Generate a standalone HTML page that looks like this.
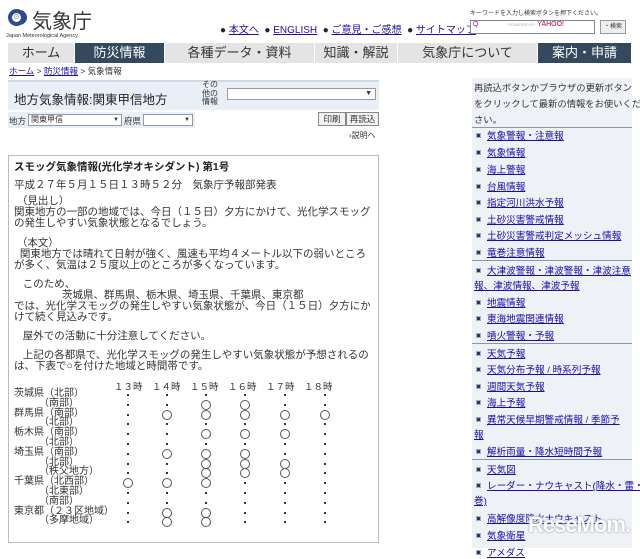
<!DOCTYPE html>
<html><head><meta charset="utf-8"><style>
*{margin:0;padding:0;box-sizing:border-box}
body{width:640px;height:548px;overflow:hidden;background:#fff;font-family:"Liberation Sans","Noto Sans CJK JP",sans-serif;font-size:11px;color:#333;position:relative}
.a{position:absolute;white-space:nowrap}
.l{color:#1a0dab;text-decoration:underline}
.tab{position:absolute;top:43px;height:20px;line-height:20px;text-align:center;font-size:13px;color:#333;background:#e4e4e4;border-right:1px solid #fff}
.dk{background:#34495e;color:#fff}
.sb .it{position:absolute;left:15px;font-size:9.6px;color:#1a0dab;text-decoration:underline;white-space:nowrap}
.sb .it:before{content:"";position:absolute;left:-11px;top:5px;width:5px;height:5px;background:#223a6e;box-shadow:inset 0 0 0 1px #aab}
.sep{position:absolute;left:0;width:160px;height:1px;background:#8a96aa}
.row{position:absolute;left:14px;font-size:10px;line-height:9.8px;color:#333}
.c{position:absolute;width:10px;height:10px;border:1px solid #555;border-radius:50%}
.d{position:absolute;width:2px;height:2px;background:#333}
.t{position:absolute;left:14px;font-size:10.5px;white-space:nowrap;line-height:11px}
</style></head><body>
<div class="a" style="left:8px;top:9px;width:17px;height:17px;border-radius:50%;background:#2c4b8e;box-shadow:3px 0 0 -1px #2c4b8e"></div>
<div class="a" style="left:12px;top:13px;width:9px;height:9px;border-radius:50%;background:#fff;color:#2c4b8e;font-size:7px;line-height:9px;text-align:center">☉</div>
<div class="a" style="left:32px;top:5px;font-size:20px;color:#333">気象庁</div>
<div class="a" style="left:6px;top:33px;font-size:5.5px;color:#333">Japan Meteorological Agency</div>
<div class="a" style="left:220px;top:21px;font-size:10px;color:#1a0dab">
<span style="color:#223">●</span> <span class="l">本文へ</span> &nbsp;<span style="color:#223">●</span> <span class="l">ENGLISH</span> &nbsp;<span style="color:#223">●</span> <span class="l">ご意見・ご感想</span> &nbsp;<span style="color:#223">●</span> <span class="l">サイトマップ</span></div>
<div class="a" style="left:470px;top:8px;font-size:6px;color:#333">キーワードを入力し検索ボタンを押下ください。</div>
<div class="a" style="left:470px;top:20px;width:125px;height:14px;border:1px solid #7a8a9a;background:#fff;font-size:7px;color:#a0a">&nbsp;Q <span style="margin-left:28px;color:#aaa;font-size:4px">POWERED BY</span> <span style="color:#c03">YAHOO!</span></div>
<div class="a" style="left:600px;top:20px;width:26px;height:14px;border:1px solid #999;background:#eee;font-size:6px;text-align:center;line-height:12px">・検索</div>
<div class="tab" style="left:8px;width:67px">ホーム</div>
<div class="tab dk" style="left:75px;width:90px">防災情報</div>
<div class="tab" style="left:165px;width:150px">各種データ・資料</div>
<div class="tab" style="left:315px;width:83px">知識・解説</div>
<div class="tab" style="left:398px;width:140px">気象庁について</div>
<div class="tab dk" style="left:538px;width:94px">案内・申請</div>
<div class="a" style="left:9px;top:65px;font-size:8.5px"><span class="l">ホーム</span> &gt; <span class="l">防災情報</span> &gt; 気象情報</div>
<div class="a" style="left:8px;top:80px;width:371px;height:30px;background:#e9eff7;border-top:2px solid #d0d8e2"></div>
<div class="a" style="left:14px;top:89px;font-size:12.5px;color:#222">地方気象情報:関東甲信地方</div>
<div class="a" style="left:202px;top:81px;font-size:8px;line-height:8.5px;white-space:normal;width:20px">その他の情報</div>
<div class="a" style="left:227px;top:88px;width:149px;height:12px;border:1px solid #999;background:#fff;font-size:7px;text-align:right;padding-right:3px;line-height:10px">▼</div>
<div class="a" style="left:8px;top:112px;width:187px;height:16px;background:#e9eff7"></div>
<div class="a" style="left:9px;top:115px;font-size:8.5px">地方</div>
<div class="a" style="left:28px;top:114px;width:94px;height:12px;border:1px solid #999;background:#fff;font-size:8px;line-height:10px;padding-left:2px">関東甲信<span style="float:right;font-size:6px;padding-right:2px">▼</span></div>
<div class="a" style="left:124px;top:115px;font-size:8.5px">府県</div>
<div class="a" style="left:143px;top:114px;width:50px;height:12px;border:1px solid #999;background:#fff;font-size:6px;line-height:10px;text-align:right;padding-right:2px">▼</div>
<div class="a" style="left:318px;top:112px;width:28px;height:14px;border:1px solid #888;background:#f2f2f2;font-size:8.5px;text-align:center;line-height:12px">印刷</div>
<div class="a" style="left:346px;top:112px;width:33px;height:14px;border:1px solid #888;background:#f2f2f2;font-size:8.5px;text-align:center;line-height:12px">再読込</div>
<div class="a" style="left:349px;top:130px;font-size:8px">›説明へ</div>
<div class="a" style="left:8px;top:155px;width:371px;height:388px;border:1px solid #bbb"></div>
<div class="a" style="left:14px;top:159px;font-size:10.5px;color:#222;font-weight:bold">スモッグ気象情報(光化学オキシダント) 第1号</div>
<div class="t" style="top:180px">平成２７年５月１５日１３時５２分　気象庁予報部発表</div>
<div class="t" style="top:196px">&nbsp;（見出し）</div>
<div class="t" style="top:207px">関東地方の一部の地域では、今日（１５日）夕方にかけて、光化学スモッグ</div>
<div class="t" style="top:218px">の発生しやすい気象状態となるでしょう。</div>
<div class="t" style="top:238px">&nbsp;（本文）</div>
<div class="t" style="top:249px">&nbsp;&nbsp;関東地方では晴れて日射が強く、風速も平均４メートル以下の弱いところ</div>
<div class="t" style="top:260px">が多く、気温は２５度以上のところが多くなっています。</div>
<div class="t" style="top:279px">&nbsp;&nbsp;&nbsp;このため、</div>
<div class="t" style="top:290px;left:62px">茨城県、群馬県、栃木県、埼玉県、千葉県、東京都</div>
<div class="t" style="top:301px">では、光化学スモッグの発生しやすい気象状態が、今日（１５日）夕方にか</div>
<div class="t" style="top:312px">けて続く見込みです。</div>
<div class="t" style="top:331px">&nbsp;&nbsp;&nbsp;屋外での活動に十分注意してください。</div>
<div class="t" style="top:350px">&nbsp;&nbsp;&nbsp;上記の各都県で、光化学スモッグの発生しやすい気象状態が予想されるの</div>
<div class="t" style="top:361px">は、下表で○を付けた地域と時間帯です。</div>
<div class="a" style="left:114px;top:379px;font-size:9.5px">１３時　１４時　１５時　１６時　１７時　１８時</div>
<div class="row" style="top:389px">茨城県（北部）<br>　　　（南部）<br>群馬県（南部）<br>　　　（北部）<br>栃木県（南部）<br>　　　（北部）<br>埼玉県（南部）<br>　　　（北部）<br>　　　（秩父地方）<br>千葉県（北西部）<br>　　　（北東部）<br>　　　（南部）<br>東京都（２３区地域）<br>　　　（多摩地域）</div>
<div id="m"></div>
<div class="a sb" style="left:472px;top:78px;width:160px;height:470px;background:#eef1f6">
<div class="a" style="left:2px;top:2px;font-size:9.3px;line-height:16px;color:#333">再読込ボタンかブラウザの更新ボタン<br>をクリックして最新の情報をお使いくだ<br>さい。</div>
<div class="sep" style="top:49px"></div>
<div class="it" style="top:50px">気象警報・注意報</div>
<div class="it" style="top:67px">気象情報</div>
<div class="it" style="top:84px">海上警報</div>
<div class="it" style="top:101px">台風情報</div>
<div class="it" style="top:117px">指定河川洪水予報</div>
<div class="it" style="top:134px">土砂災害警戒情報</div>
<div class="it" style="top:150px">土砂災害警戒判定メッシュ情報</div>
<div class="it" style="top:167px">竜巻注意情報</div>
<div class="sep" style="top:182px"></div>
<div class="it" style="top:185px">大津波警報・津波警報・津波注意</div>
<div class="a" style="left:2px;top:200px;font-size:9.6px;color:#1a0dab;text-decoration:underline">報、津波情報、津波予報</div>
<div class="it" style="top:217px">地震情報</div>
<div class="it" style="top:233px">東海地震関連情報</div>
<div class="it" style="top:250px">噴火警報・予報</div>
<div class="sep" style="top:265px"></div>
<div class="it" style="top:268px">天気予報</div>
<div class="it" style="top:284px">天気分布予報 <span style="color:#333">/</span> 時系列予報</div>
<div class="it" style="top:301px">週間天気予報</div>
<div class="it" style="top:317px">海上予報</div>
<div class="it" style="top:334px">異常天候早期警戒情報 <span style="color:#333">/</span> 季節予</div>
<div class="a" style="left:2px;top:349px;font-size:9.6px;color:#1a0dab;text-decoration:underline">報</div>
<div class="it" style="top:366px">解析雨量・降水短時間予報</div>
<div class="sep" style="top:381px"></div>
<div class="it" style="top:384px">天気図</div>
<div class="it" style="top:400px">レーダー・ナウキャスト(降水・雷・竜</div>
<div class="a" style="left:2px;top:415px;font-size:9.6px;color:#1a0dab;text-decoration:underline">巻)</div>
<div class="it" style="top:433px">高解像度降水ナウキャスト</div>
<div class="it" style="top:450px">気象衛星</div>
<div class="it" style="top:467px">アメダス</div>
</div>
<div class="a" style="left:528px;top:512px;font-size:22px;font-weight:bold;color:#fff;text-shadow:0 0 2px #888;letter-spacing:-1px">ReseMom.</div>
<script>
var cols=[128,167,206,245,285,325];
var g=["......","..OO..",".OOOOO","......","..OOO.","......",".OOO..","..OOO.","..OOO.","OOO...","......","......",".OO...",".OO..."];
var h="";
for(var r=0;r<14;r++){var y=394+r*9.8;for(var c=0;c<6;c++){if(g[r][c]=="O")h+='<div class="c" style="left:'+(cols[c]-5)+'px;top:'+(y-4)+'px"></div>';else h+='<div class="d" style="left:'+(cols[c]-1)+'px;top:'+y+'px"></div>';}}
document.getElementById("m").innerHTML=h;
</script>
</body></html>
